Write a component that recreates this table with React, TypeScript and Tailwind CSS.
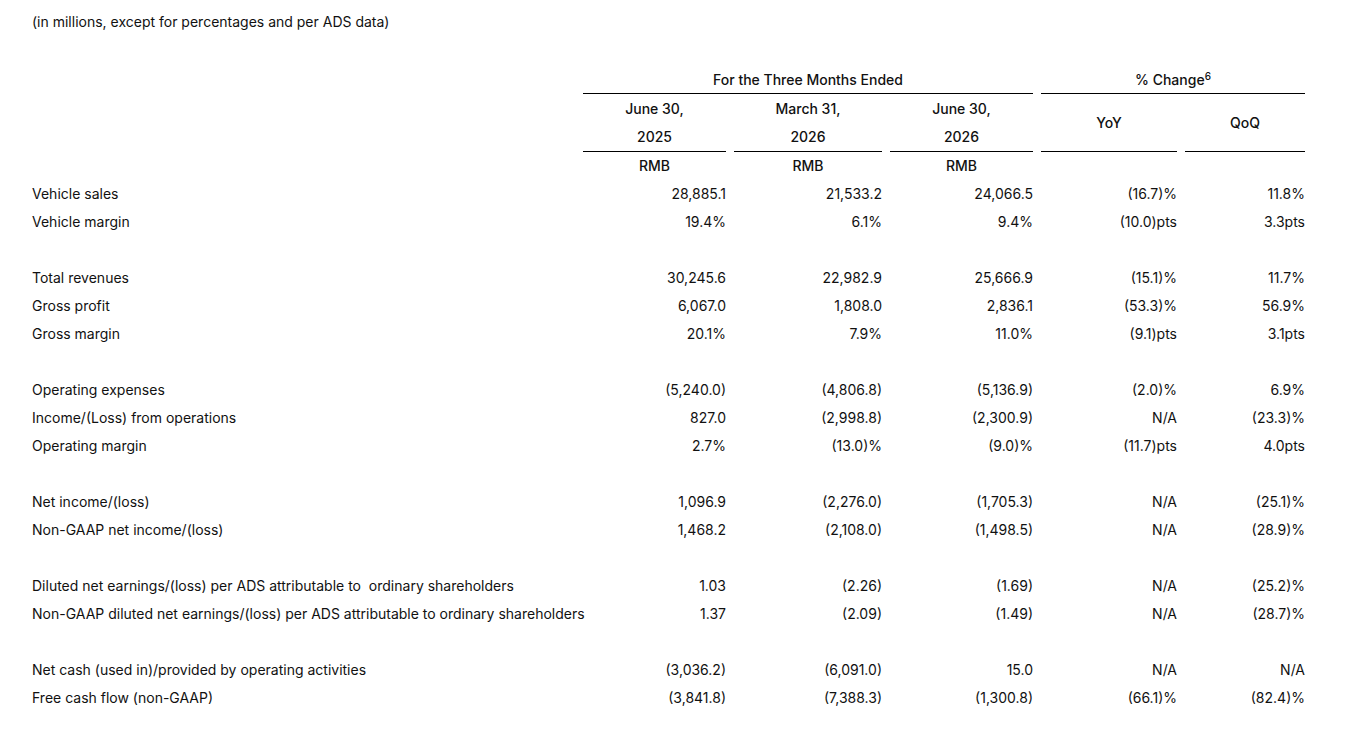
const rows: (string[] | null)[] = [
  ["Vehicle sales", "28,885.1", "21,533.2", "24,066.5", "(16.7)%", "11.8%"],
  ["Vehicle margin", "19.4%", "6.1%", "9.4%", "(10.0)pts", "3.3pts"],
  null,
  ["Total revenues", "30,245.6", "22,982.9", "25,666.9", "(15.1)%", "11.7%"],
  ["Gross profit", "6,067.0", "1,808.0", "2,836.1", "(53.3)%", "56.9%"],
  ["Gross margin", "20.1%", "7.9%", "11.0%", "(9.1)pts", "3.1pts"],
  null,
  ["Operating expenses", "(5,240.0)", "(4,806.8)", "(5,136.9)", "(2.0)%", "6.9%"],
  ["Income/(Loss) from operations", "827.0", "(2,998.8)", "(2,300.9)", "N/A", "(23.3)%"],
  ["Operating margin", "2.7%", "(13.0)%", "(9.0)%", "(11.7)pts", "4.0pts"],
  null,
  ["Net income/(loss)", "1,096.9", "(2,276.0)", "(1,705.3)", "N/A", "(25.1)%"],
  ["Non-GAAP net income/(loss)", "1,468.2", "(2,108.0)", "(1,498.5)", "N/A", "(28.9)%"],
  null,
  ["Diluted net earnings/(loss) per ADS attributable to  ordinary shareholders", "1.03", "(2.26)", "(1.69)", "N/A", "(25.2)%"],
  ["Non-GAAP diluted net earnings/(loss) per ADS attributable to ordinary shareholders", "1.37", "(2.09)", "(1.49)", "N/A", "(28.7)%"],
  null,
  ["Net cash (used in)/provided by operating activities", "(3,036.2)", "(6,091.0)", "15.0", "N/A", "N/A"],
  ["Free cash flow (non-GAAP)", "(3,841.8)", "(7,388.3)", "(1,300.8)", "(66.1)%", "(82.4)%"],
];

const dates = [
  ["June 30,", "2025"],
  ["March 31,", "2026"],
  ["June 30,", "2026"],
];

export default function App() {
  return (
    <div
      className="min-h-screen bg-white pt-2 pl-8 text-[14px] text-[#111]"
      style={{ fontFamily: "Inter, 'Noto Sans', sans-serif" }}
    >
      <p className="h-7 leading-7">(in millions, except for percentages and per ADS data)</p>
      <div className="mt-[30px] grid grid-cols-[543px_143px_148px_143px_136px_120px] gap-x-2 leading-7">
        <div />
        <div className="col-span-3 h-7 border-b border-black text-center font-medium">
          For the Three Months Ended
        </div>
        <div className="col-span-2 h-7 border-b border-black text-center font-medium">
          % Change<sup className="text-[10px]">6</sup>
        </div>

        <div />
        {dates.map((d, i) => (
          <div key={i} className="border-b border-black pt-px text-center font-medium">
            <div className="h-7">{d[0]}</div>
            <div className="h-7">{d[1]}</div>
          </div>
        ))}
        <div className="flex items-center justify-center border-b border-black font-medium">YoY</div>
        <div className="flex items-center justify-center border-b border-black font-medium">QoQ</div>

        <div />
        {dates.map((_, i) => (
          <div key={i} className="h-7 text-center font-medium">RMB</div>
        ))}
        <div />
        <div />

        {rows.map((r, i) =>
          r ? (
            r.map((c, j) => (
              <div key={`${i}-${j}`} className={`h-7 whitespace-pre ${j === 0 ? "" : "text-right"}`}>
                {c}
              </div>
            ))
          ) : (
            <div key={i} className="col-span-6 h-7" />
          )
        )}
      </div>
    </div>
  );
}
